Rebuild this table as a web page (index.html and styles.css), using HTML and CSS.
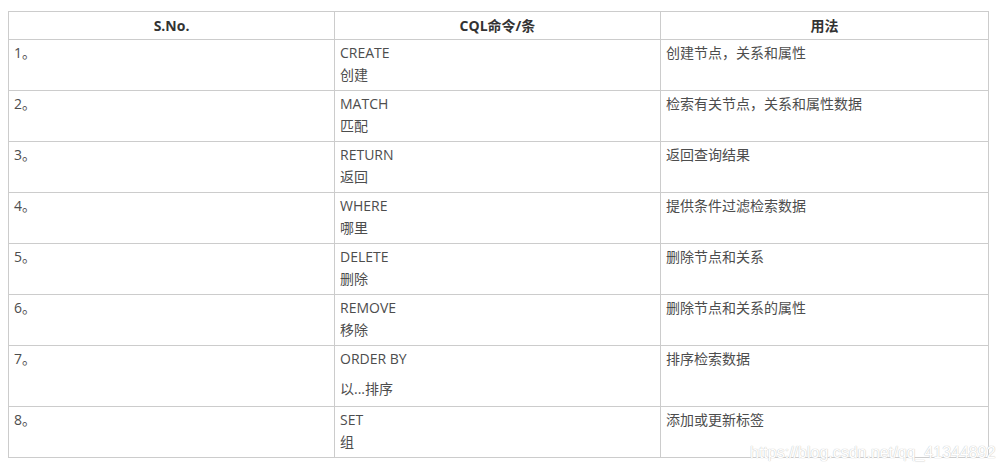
FILE: index.html
```html
<!DOCTYPE html>
<html lang="zh-CN">
<head>
<meta charset="utf-8">
<title>CQL</title>
<link rel="stylesheet" href="styles.css">
</head>
<body>
<div class="page">
  <table class="cql">
    <colgroup>
      <col class="c1"><col class="c2"><col class="c3">
    </colgroup>
    <thead>
      <tr><th>S.No.</th><th>CQL命令/条</th><th>用法</th></tr>
    </thead>
    <tbody>
      <tr><td>1。</td><td><div>CREATE</div><div>创建</div></td><td>创建节点，关系和属性</td></tr>
      <tr><td>2。</td><td><div>MATCH</div><div>匹配</div></td><td>检索有关节点，关系和属性数据</td></tr>
      <tr><td>3。</td><td><div>RETURN</div><div>返回</div></td><td>返回查询结果</td></tr>
      <tr><td>4。</td><td><div>WHERE</div><div>哪里</div></td><td>提供条件过滤检索数据</td></tr>
      <tr><td>5。</td><td><div>DELETE</div><div>删除</div></td><td>删除节点和关系</td></tr>
      <tr><td>6。</td><td><div>REMOVE</div><div>移除</div></td><td>删除节点和关系的属性</td></tr>
      <tr><td>7。</td><td><div>ORDER BY</div><div class="tall">以...排序</div></td><td>排序检索数据</td></tr>
      <tr><td>8。</td><td><div>SET</div><div>组</div></td><td>添加或更新标签</td></tr>
    </tbody>
  </table>
  <div class="watermark">https://blog.csdn.net/qq_41344892</div>
</div>
</body>
</html>
```
FILE: styles.css
```css
html, body {
  margin: 0;
  padding: 0;
  background: #ffffff;
}
.page {
  position: relative;
  padding: 11px 0 0 8px;
  width: 1003px;
  height: 474px;
  box-sizing: border-box;
}
.cql {
  border-collapse: collapse;
  width: 980px;
  table-layout: fixed;
  font-family: "Open Sans", "Noto Sans CJK SC", sans-serif;
  font-size: 14px;
  color: #4d4d4d;
}
.cql .c1 { width: 326px; }
.cql .c2 { width: 326px; }
.cql .c3 { width: 328px; }
.cql th, .cql td {
  border: 1px solid #cccccc;
  text-align: left;
  vertical-align: top;
  line-height: 22px;
}
.cql th {
  padding: 3px 5px 2px;
  text-align: center;
  font-weight: bold;
  color: #333333;
}
.cql td {
  padding: 2px 4px 4px 5px;
}
.cql .tall {
  margin-top: 6px;
  line-height: 26px;
}
.watermark {
  position: absolute;
  left: 750px;
  top: 443px;
  font-family: "Liberation Sans", Arial, sans-serif;
  font-size: 16px;
  line-height: 20px;
  color: #ffffff;
  text-shadow: 0 0 1px #c8c8c8, 0 0 1px #c8c8c8;
  white-space: nowrap;
}
```
